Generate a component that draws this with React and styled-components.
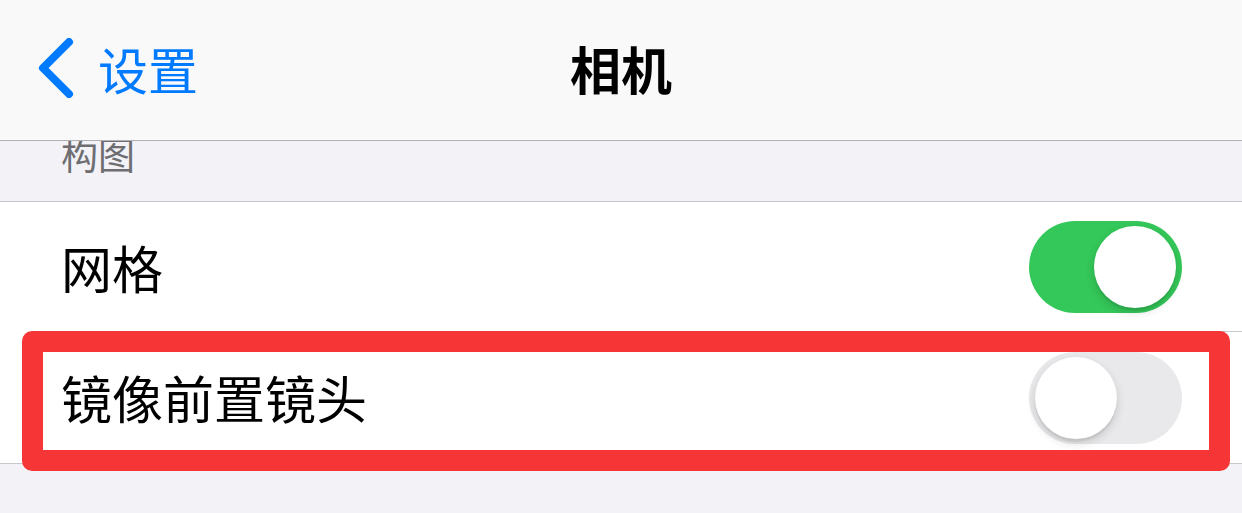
import React from "react";
import styled, { createGlobalStyle } from "styled-components";

const Global = createGlobalStyle`
  html, body { margin: 0; padding: 0; background: #f2f2f7; }
  body { font-family: "Noto Sans CJK SC", "Noto Sans", sans-serif; }
`;

const Page = styled.div`
  width: 1242px;
  height: 513px;
  overflow: hidden;
  display: flex;
  flex-direction: column;
  background: #f2f2f7;
`;

const NavBar = styled.header`
  position: relative;
  z-index: 2;
  box-sizing: border-box;
  height: 141px;
  flex-shrink: 0;
  background: #f9f9fa;
  border-bottom: 1px solid #b1b1b4;
  display: grid;
  grid-template-columns: 1fr auto 1fr;
  align-items: center;
  padding-bottom: 4px;
`;

const BackButton = styled.div`
  display: flex;
  align-items: center;
  gap: 24px;
  padding-left: 38px;
  color: #007aff;
  font-size: 50px;
  line-height: 1;
`;

const Title = styled.div`
  font-size: 51px;
  font-weight: 700;
  color: #000;
  line-height: 1;
`;

const SectionHeader = styled.div`
  height: 61px;
  flex-shrink: 0;
  overflow: hidden;
  display: flex;
  align-items: flex-start;
  padding-left: 61px;
  color: #6d6d72;
  font-size: 37px;
  line-height: 1;
  margin-top: -1px;
`;

const HeaderText = styled.span`
  margin-top: -4px;
`;

const Group = styled.section`
  background: #fff;
  border-top: 1px solid #c8c7cc;
  border-bottom: 1px solid #c8c7cc;
`;

const Row = styled.div`
  position: relative;
  box-sizing: border-box;
  height: ${(p) => p.$h}px;
  display: flex;
  align-items: center;
  justify-content: space-between;
  padding: 0 60px 0 61px;
  ${(p) =>
    p.$separator &&
    `&::after {
      content: "";
      position: absolute;
      left: 62px;
      right: 0;
      bottom: 0;
      height: 1px;
      background: #c8c7cc;
    }`}
`;

const Label = styled.span`
  font-size: 51px;
  line-height: 1;
  color: #000;
`;

const Track = styled.div`
  position: relative;
  width: 153px;
  height: 92px;
  border-radius: 46px;
  background: ${(p) => (p.$on ? "#34c759" : "#e9e9eb")};
  flex-shrink: 0;
`;

const Knob = styled.div`
  position: absolute;
  top: 5px;
  ${(p) => (p.$on ? "right: 6px;" : "left: 6px;")}
  width: 82px;
  height: 82px;
  border-radius: 50%;
  background: #fff;
  box-shadow: 0 4px 10px rgba(0, 0, 0, 0.15), 0 3px 1px rgba(0, 0, 0, 0.06);
`;

const Highlight = styled.div`
  position: absolute;
  left: 22px;
  top: -1px;
  width: 1208px;
  height: 140px;
  box-sizing: border-box;
  border: 21px solid #f63636;
  border-radius: 10px;
  pointer-events: none;
`;

const Switch = ({ on }) => (
  <Track $on={on}>
    <Knob $on={on} />
  </Track>
);

const Chevron = () => (
  <svg width="36" height="60" viewBox="0 0 36 60" style={{ display: "block" }}>
    <path
      d="M31 4 L5 30 L31 56"
      fill="none"
      stroke="#007aff"
      strokeWidth="8"
      strokeLinecap="round"
      strokeLinejoin="round"
    />
  </svg>
);

export default function App() {
  return (
    <Page>
      <Global />
      <NavBar>
        <BackButton>
          <Chevron />
          <span>设置</span>
        </BackButton>
        <Title>相机</Title>
        <div />
      </NavBar>
      <SectionHeader>
        <HeaderText>构图</HeaderText>
      </SectionHeader>
      <Group>
        <Row $h={130} $separator>
          <Label>网格</Label>
          <Switch on />
        </Row>
        <Row $h={131}>
          <Label>镜像前置镜头</Label>
          <Switch on={false} />
          <Highlight />
        </Row>
      </Group>
    </Page>
  );
}
